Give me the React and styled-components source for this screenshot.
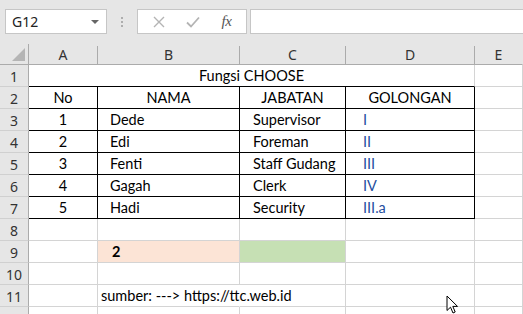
import React from "react";
import styled, { createGlobalStyle } from "styled-components";

const GRID = "#d4d4d4";
const HEAD_BG = "#e6e6e6";
const HEAD_LINE = "#ababab";
const BLUE = "#1f4f9e";

const Global = createGlobalStyle`
  html, body { margin: 0; padding: 0; background: #fff; overflow: hidden; }
  body { width: 523px; height: 314px; position: relative; }
`;

const Page = styled.div`
  width: 523px;
  height: 314px;
  overflow: hidden;
  position: relative;
  font-family: "Lato", "Liberation Sans", sans-serif;
`;

const TopBar = styled.div`
  height: 44px;
  background: ${HEAD_BG};
  display: flex;
  align-items: flex-start;
  padding: 9px 0 0 5px;
  box-sizing: border-box;
`;

const NameBox = styled.div`
  width: 102px;
  height: 25px;
  box-sizing: border-box;
  background: #fff;
  border: 1px solid #c6c6c6;
  display: flex;
  align-items: center;
  justify-content: space-between;
  padding: 0 7px 0 6px;
  font-family: "Noto Sans", "Open Sans", sans-serif;
  font-size: 14px;
  color: #222;
`;

const Caret = styled.span`
  width: 0;
  height: 0;
  border-left: 4px solid transparent;
  border-right: 4px solid transparent;
  border-top: 4px solid #666;
  margin-top: 1px;
`;

const Grip = styled.div`
  width: 30px;
  height: 25px;
  display: flex;
  flex-direction: column;
  align-items: center;
  justify-content: center;
  gap: 2px;
  & > span {
    width: 2px;
    height: 2px;
    background: #adadad;
  }
`;

const FxBox = styled.div`
  width: 110px;
  height: 25px;
  box-sizing: border-box;
  background: #fff;
  border: 1px solid #c6c6c6;
  display: flex;
  align-items: center;
  justify-content: space-around;
  padding: 0 4px;
`;

const Fx = styled.span`
  font-family: "Liberation Serif", serif;
  font-style: italic;
  font-size: 15px;
  color: #555;
  letter-spacing: -0.5px;
`;

const FormulaInput = styled.div`
  flex: 1;
  height: 25px;
  box-sizing: border-box;
  background: #fff;
  border: 1px solid #c6c6c6;
  border-right: none;
  margin-left: 3px;
`;

const Sheet = styled.div`
  display: grid;
  grid-template-columns: 29px 69px 142px 106px 129px 1fr;
  grid-auto-rows: 22px;
  grid-template-rows: 21px;
`;

const ColHead = styled.div`
  background: ${HEAD_BG};
  border-bottom: 1px solid ${HEAD_LINE};
  border-right: 1px solid ${(p) => (p.$last ? "transparent" : HEAD_LINE)};
  box-sizing: border-box;
  display: flex;
  align-items: center;
  justify-content: center;
  padding-top: 1px;
  font-family: "Noto Sans", "Open Sans", sans-serif;
  font-size: 14px;
  color: #333;
  position: relative;
  &::after {
    content: "";
    position: absolute;
    right: -1px;
    top: 0;
    height: 2px;
    width: 1px;
    background: ${HEAD_BG};
  }
`;

const Corner = styled.div`
  background: ${HEAD_BG};
  border-bottom: 1px solid ${HEAD_LINE};
  border-right: 1px solid ${HEAD_LINE};
  box-sizing: border-box;
  position: relative;
  &::before {
    content: "";
    position: absolute;
    right: 3px;
    bottom: 3px;
    width: 0;
    height: 0;
    border-left: 13px solid transparent;
    border-bottom: 13px solid #b5b5b5;
  }
`;

const RowHead = styled.div`
  background: ${HEAD_BG};
  border-right: 1px solid ${HEAD_LINE};
  border-bottom: 1px solid #d0d0d0;
  box-sizing: border-box;
  display: flex;
  align-items: center;
  justify-content: center;
  padding-top: 1px;
  font-family: "Noto Sans", "Open Sans", sans-serif;
  font-size: 14px;
  color: #333;
`;

const Cell = styled.div`
  box-sizing: border-box;
  border-right: 1px solid ${(p) => (p.$boxR ? "#000" : GRID)};
  border-bottom: 1px solid ${(p) => (p.$boxB ? "#000" : GRID)};
  background: ${(p) => p.$fill || "#fff"};
  grid-column: ${(p) => p.$span || "auto"};
  display: flex;
  align-items: flex-end;
  justify-content: ${(p) =>
    p.$align === "center" ? "center" : "flex-start"};
  padding: 0 0 2px ${(p) => p.$indent || 0}px;
  font-size: 14.5px;
  font-weight: ${(p) => (p.$bold ? 700 : 400)};
  color: ${(p) => p.$color || "#000"};
  white-space: nowrap;
  overflow: visible;
  position: relative;
  z-index: ${(p) => (p.$over ? 1 : 0)};
`;

const Cursor = styled.svg`
  position: absolute;
  left: 446px;
  top: 295px;
  z-index: 5;
`;

const data = [
  ["1", "Dede", "Supervisor", "I"],
  ["2", "Edi", "Foreman", "II"],
  ["3", "Fenti", "Staff Gudang", "III"],
  ["4", "Gagah", "Clerk", "IV"],
  ["5", "Hadi", "Security", "III.a"],
];

const cols = ["A", "B", "C", "D", "E"];

const EmptyRow = ({ n }) => (
  <>
    <RowHead>{n}</RowHead>
    <Cell />
    <Cell />
    <Cell />
    <Cell />
    <Cell />
  </>
);

export default function App() {
  return (
    <Page>
      <Global />
      <TopBar>
        <NameBox>
          G12
          <Caret />
        </NameBox>
        <Grip>
          <span />
          <span />
          <span />
        </Grip>
        <FxBox>
          <svg width="12" height="12" viewBox="0 0 12 12">
            <path d="M1 1 L11 11 M11 1 L1 11" stroke="#b4b4b4" strokeWidth="1.4" fill="none" />
          </svg>
          <svg width="14" height="12" viewBox="0 0 14 12">
            <path d="M1 6.5 L5 10.5 L13 1.5" stroke="#b4b4b4" strokeWidth="1.8" fill="none" />
          </svg>
          <Fx>fx</Fx>
        </FxBox>
        <FormulaInput />
      </TopBar>
      <Sheet>
        <Corner />
        {cols.map((c, i) => (
          <ColHead key={c} $last={i === cols.length - 1}>
            {c}
          </ColHead>
        ))}

        <RowHead>1</RowHead>
        <Cell $span="2 / span 4" $align="center" $boxB>
          Fungsi CHOOSE
        </Cell>
        <Cell />

        <RowHead>2</RowHead>
        <Cell $align="center" $boxR $boxB>No</Cell>
        <Cell $align="center" $boxR $boxB>NAMA</Cell>
        <Cell $align="center" $boxR $boxB>JABATAN</Cell>
        <Cell $align="center" $boxR $boxB>GOLONGAN</Cell>
        <Cell />

        {data.map((r, i) => (
          <React.Fragment key={r[0]}>
            <RowHead>{i + 3}</RowHead>
            <Cell $align="center" $boxR $boxB>{r[0]}</Cell>
            <Cell $indent={12} $boxR $boxB>{r[1]}</Cell>
            <Cell $indent={13} $boxR $boxB>{r[2]}</Cell>
            <Cell $indent={17} $boxR $boxB $color={BLUE}>{r[3]}</Cell>
            <Cell />
          </React.Fragment>
        ))}

        <EmptyRow n={8} />
        <RowHead>9</RowHead>
        <Cell />
        <Cell $fill="#fce4d6" $indent={14} $bold>2</Cell>
        <Cell $fill="#c6e0b4" />
        <Cell />
        <Cell />
        <EmptyRow n={10} />
        <RowHead>11</RowHead>
        <Cell />
        <Cell $indent={3} $over style={{ borderRightColor: "transparent" }}>
          sumber: ---&gt; https://ttc.web.id
        </Cell>
        <Cell />
        <Cell />
        <Cell />
        <EmptyRow n={12} />
      </Sheet>
      <Cursor width="14" height="20" viewBox="0 0 14 20">
        <path
          d="M1 1 L1 15.5 L4.5 12.2 L7 18 L9.2 17 L6.8 11.4 L11.5 11.4 Z"
          fill="#fff"
          stroke="#000"
          strokeWidth="1"
          strokeLinejoin="miter"
        />
      </Cursor>
    </Page>
  );
}
